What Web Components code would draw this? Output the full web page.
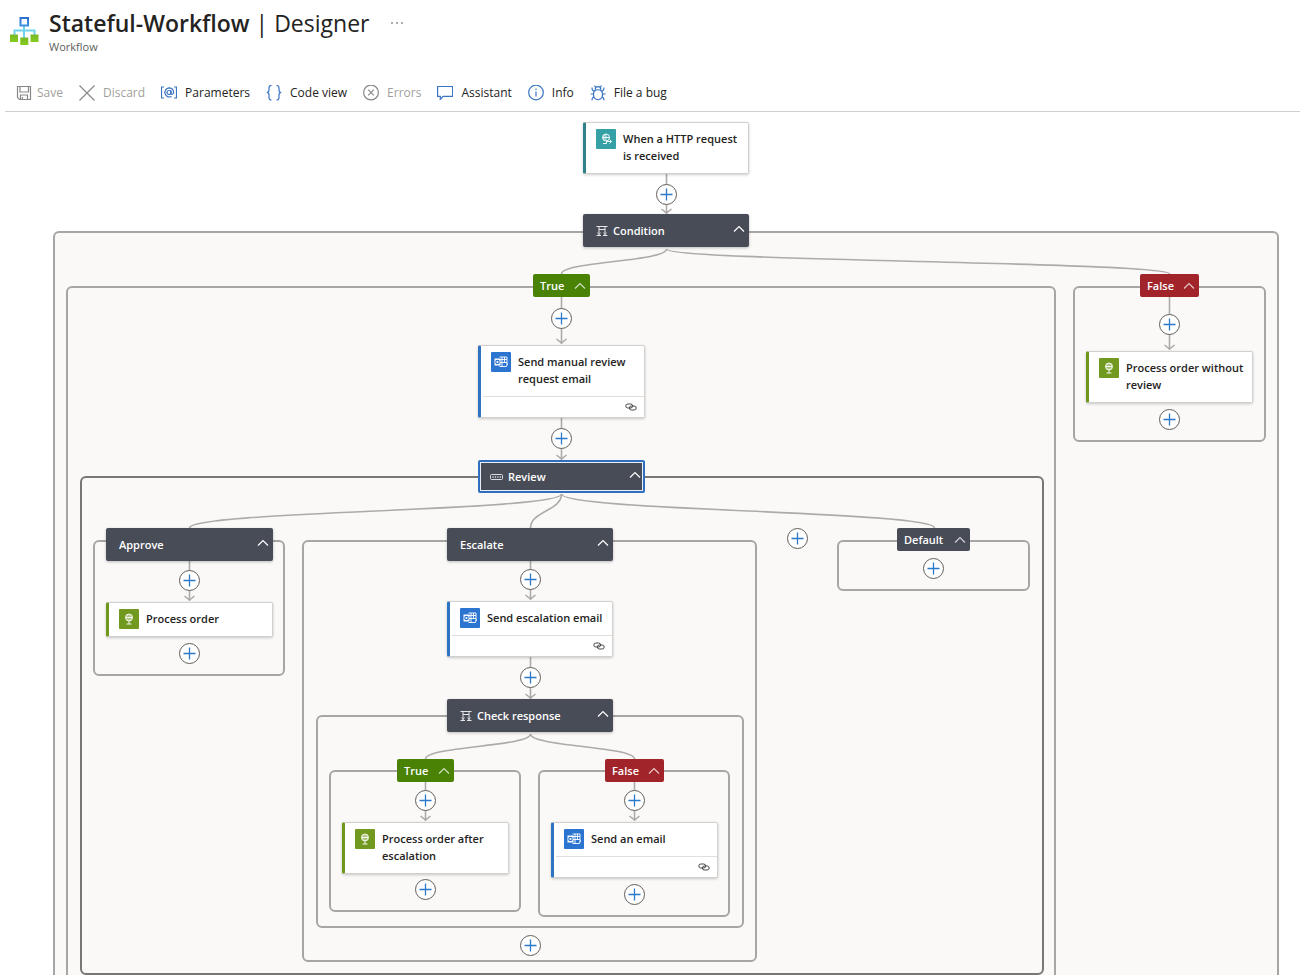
<!DOCTYPE html>
<html lang="en">
<head>
<meta charset="utf-8">
<title>Stateful-Workflow | Designer</title>
<style>
  html, body { height: 100%; margin: 0; }
  body { background: #fff; color: #242322; font-family: "Open Sans", "Noto Sans", sans-serif; }
</style>
</head>
<body>
<workflow-app>
  <blade-header slot="header" name="Stateful-Workflow" page="Designer" kind="Workflow"></blade-header>
  <command-bar slot="header">
    <command-button icon="save" disabled>Save</command-button>
    <command-button icon="discard" disabled>Discard</command-button>
    <command-button icon="parameters">Parameters</command-button>
    <command-button icon="code">Code view</command-button>
    <command-button icon="errors" disabled>Errors</command-button>
    <command-button icon="assistant">Assistant</command-button>
    <command-button icon="info">Info</command-button>
    <command-button icon="bug">File a bug</command-button>
  </command-bar>

  <scope-frame x="53" y="119" w="1226" h="1000"></scope-frame>
  <scope-frame x="66" y="174" w="990" h="900"></scope-frame>
  <scope-frame x="1073" y="174" w="193" h="156"></scope-frame>
  <scope-frame x="80" y="364" w="964" h="499" selected></scope-frame>
  <scope-frame x="93" y="428" w="192" h="136"></scope-frame>
  <scope-frame x="302" y="428" w="455" h="422"></scope-frame>
  <scope-frame x="837" y="428" w="193" h="51"></scope-frame>
  <scope-frame x="316" y="603" w="428" h="213"></scope-frame>
  <scope-frame x="329" y="658" w="192" h="142"></scope-frame>
  <scope-frame x="538" y="658" w="192" h="147"></scope-frame>

  <flow-edges></flow-edges>

  <action-card x="583" y="10" w="166" kind="request">When a HTTP request is received</action-card>
  <add-step x="656" y="72"></add-step>
  <scope-header x="583" y="102" w="166" icon="condition">Condition</scope-header>

  <scope-tag x="533" y="162" w="57" tone="true">True</scope-tag>
  <add-step x="551" y="196"></add-step>
  <action-card x="478" y="233" w="167" kind="outlook" linked>Send manual review request email</action-card>
  <add-step x="551" y="316"></add-step>
  <scope-header x="478" y="348" w="167" icon="switch" selected>Review</scope-header>

  <scope-tag x="1140" y="162" w="59" tone="false">False</scope-tag>
  <add-step x="1159" y="202"></add-step>
  <action-card x="1086" y="239" w="167" kind="http">Process order without review</action-card>
  <add-step x="1159" y="297"></add-step>

  <scope-header x="106" y="416" w="167">Approve</scope-header>
  <add-step x="179" y="458"></add-step>
  <action-card x="106" y="490" w="167" kind="http">Process order</action-card>
  <add-step x="179" y="531"></add-step>

  <scope-header x="447" y="416" w="166">Escalate</scope-header>
  <add-step x="520" y="457"></add-step>
  <action-card x="447" y="489" w="166" kind="outlook" linked>Send escalation email</action-card>
  <add-step x="520" y="555"></add-step>
  <scope-header x="447" y="587" w="166" icon="condition">Check response</scope-header>

  <add-step x="787" y="416"></add-step>
  <scope-tag x="897" y="416" w="73" tone="default">Default</scope-tag>
  <add-step x="923" y="446"></add-step>

  <scope-tag x="397" y="647" w="57" tone="true">True</scope-tag>
  <add-step x="415" y="678"></add-step>
  <action-card x="342" y="710" w="167" kind="http">Process order after escalation</action-card>
  <add-step x="415" y="767"></add-step>

  <scope-tag x="605" y="647" w="59" tone="false">False</scope-tag>
  <add-step x="624" y="678"></add-step>
  <action-card x="551" y="710" w="167" kind="outlook" linked>Send an email</action-card>
  <add-step x="624" y="772"></add-step>
  <add-step x="520" y="823"></add-step>
</workflow-app>

<script>
const ICONS = {
  save: '<path d="M1.500 1.500h13v13H3.500l-2-2zM4 1.500v5.500h8.500V1.500M4.500 14.500V10h7v4.500M6.500 12v2.500"/>',
  discard: '<path d="M.5.5l15 15M15.500.500l-15 15"/>',
  parameters: '<path d="M3 2H.500v11H3M13 2h2.500v11H13"/><circle cx="8" cy="7.500" r="2"/><path d="M10 5.300v2.800c0 1.900 2.600 1.500 2.600-.8C12.600 4.500 10.600 2.800 8 2.800A4.600 4.600 0 1 0 10.500 11.500"/>',
  code: '<path d="M5.500.500C3.500.500 3 1.500 3 3v2C3 6.500 2.300 7.500.7 7.500 2.300 7.500 3 8.500 3 10v2.500C3 14 3.500 15 5.500 15M10.500.500c2 0 2.500 1 2.500 2.500v2C13 6.500 13.700 7.500 15.300 7.500 13.700 7.500 13 8.500 13 10v2.500c0 1.500-.5 2.500-2.500 2.500"/>',
  errors: '<circle cx="8" cy="7.500" r="7.400"/><path d="M5.200 4.700l5.600 5.600M10.800 4.700l-5.600 5.600"/>',
  assistant: '<path d="M.6 1.500h15v9.800H6.200L3.300 14.200V11.300H.6z"/>',
  info: '<circle cx="8" cy="7.500" r="7.300"/><path d="M8 6.500v5M8 3.500v1.400"/>',
  bug: '<path d="M5.200 4.500a2.800 2.800 0 0 1 5.600 0M5 5.500C6 4.500 10 4.500 11 5.500c2 2 2 5.500.5 7.500-1.700 2.300-5.300 2.300-7 0-1.500-2-1.500-5.500.5-7.500zM5.800 2.500L4.500.700M10.200 2.500l1.300-1.800M4.500 6C2.500 6 2 5 2 2.500M11.500 6c2 0 2.500-1 2.500-3.500M3.400 9H.600M12.600 9h3M4.400 12C2.500 12 2 13 2 15.300M11.600 12c1.900 0 2.400 1 2.400 3.300"/>',
};

const sheet = (host, css, html) => {
  const root = host.attachShadow({ mode: "open" });
  root.innerHTML = `<style>*{box-sizing:border-box}${css}</style>${html}`;
  return root;
};

/* Base of everything that has a place on the canvas: reads x, y, w, h. */
class CanvasItem extends HTMLElement {
  place() {
    const s = this.style;
    s.left = this.getAttribute("x") + "px";
    s.top = this.getAttribute("y") + "px";
    if (this.hasAttribute("w")) s.width = this.getAttribute("w") + "px";
    if (this.hasAttribute("h")) s.height = this.getAttribute("h") + "px";
  }
}

customElements.define("workflow-app", class extends HTMLElement {
  connectedCallback() {
    sheet(this, `
      :host{display:flex;flex-direction:column;height:100%;min-height:600px}
      main{position:relative;flex:1;min-height:0;overflow:hidden}`,
      `<slot name="header"></slot><main><slot></slot></main>`);
  }
});

customElements.define("blade-header", class extends HTMLElement {
  connectedCallback() {
    sheet(this, `
      :host{display:block}
      header{display:flex;gap:10px;padding:8px 10px 20px}
      .logo{flex:none;width:29px;height:30px;margin-top:8px}
      .row{display:flex;align-items:center;gap:20px}
      h1{margin:0;font-size:23px;line-height:30px;font-weight:400;white-space:nowrap}
      h1 b{font-weight:600}
      p{margin:0;font-size:11px;line-height:17px;color:#605e5c}
      button{border:0;background:none;padding:0;width:16px;height:16px;display:flex;color:#444}`,
      `<header>
        <svg class="logo" viewBox="0 0 29 30" aria-hidden="true">
          <defs>
            <linearGradient id="b" x2="0" y2="1"><stop stop-color="#2f6fd0"/><stop offset="1" stop-color="#3d8fe0"/></linearGradient>
            <linearGradient id="g" x2="0" y2="1"><stop stop-color="#79b829"/><stop offset="1" stop-color="#84cc1c"/></linearGradient>
          </defs>
          <path d="M14 10v12M4.500 19v-4.500h20V19" fill="none" stroke="#6fd3ee" stroke-width="2"/>
          <rect x="10.500" y="2" width="7.500" height="7.500" fill="#fff" stroke="url(#b)" stroke-width="2"/>
          <rect x="0" y="18.500" width="8" height="7.500" fill="url(#g)"/>
          <rect x="10.300" y="21.500" width="8" height="7.500" fill="url(#g)"/>
          <rect x="20.500" y="18.500" width="8" height="7.500" fill="url(#g)"/>
        </svg>
        <div>
          <div class="row"><h1><b>${this.getAttribute("name")}</b> | ${this.getAttribute("page")}</h1>
            <button aria-label="More actions"><svg width="16" height="16" fill="currentColor"><circle cx="3" cy="8" r=".8"/><circle cx="8" cy="8" r=".8"/><circle cx="13" cy="8" r=".8"/></svg></button></div>
          <p>${this.getAttribute("kind")}</p>
        </div>
      </header>`);
  }
});

customElements.define("command-bar", class extends HTMLElement {
  connectedCallback() {
    this.setAttribute("role", "toolbar");
    sheet(this, `
      :host{display:flex;gap:16px;height:37px;align-items:center;margin-left:5px;padding-left:11px;border-bottom:1px solid #d2d0ce;box-sizing:border-box}`,
      `<slot></slot>`);
  }
});

customElements.define("command-button", class extends HTMLElement {
  connectedCallback() {
    const icon = this.getAttribute("icon");
    sheet(this, `
      :host{display:block}
      button{display:flex;align-items:center;gap:8px;padding:0;border:0;background:none;font:inherit;font-size:12px;line-height:20px;color:#242322;white-space:nowrap}
      button:disabled{color:#a19f9d}
      .save{gap:5px}
      svg{flex:none;fill:none;stroke:#3a74c4;stroke-width:1.2}
      button:disabled svg{stroke:#8a8886}`,
      `<button class="${icon}" ${this.hasAttribute("disabled") ? "disabled" : ""}>
        <svg width="16" height="16" viewBox="0 0 16 16" aria-hidden="true">${ICONS[icon]}</svg><span><slot></slot></span></button>`);
  }
});

customElements.define("scope-frame", class extends CanvasItem {
  connectedCallback() {
    this.place();
    sheet(this, `
      :host{display:block;position:absolute;box-sizing:border-box;border:2px solid #a8a6a4;border-radius:6px;background:#faf9f8}
      :host([selected]){border-color:#797775}`, "");
  }
});

customElements.define("flow-edges", class extends HTMLElement {
  connectedCallback() {
    const arrows = [[666, 62, 102], [561, 185, 232], [561, 306, 348], [1169, 185, 238], [189, 449, 489],
      [530, 449, 488], [530, 545, 587], [425, 670, 709], [634, 670, 709]];
    const curves = [[666, 137, 561, 162], [666, 137, 1169, 162], [561, 382, 189, 416], [561, 382, 530, 416],
      [561, 382, 934, 416], [530, 622, 425, 647], [530, 622, 634, 647]];
    const straight = arrows.map(([x, a, b]) => `<path d="M${x} ${a}V${b}M${x - 5} ${b - 5}L${x} ${b - 1}L${x + 5} ${b - 5}"/>`).join("");
    const bent = curves.map(([x1, y1, x2, y2]) => {
      const m = (y1 + y2) / 2;
      return `<path d="M${x1} ${y1}C${x1} ${m} ${x2} ${m} ${x2} ${y2}"/>`;
    }).join("");
    sheet(this, `
      :host{display:block;position:absolute;inset:0}
      svg{width:100%;height:100%;fill:none;stroke:#adabaa;stroke-width:1.6}`,
      `<svg aria-hidden="true"><g transform="translate(.5 0)">${straight}${bent}</g></svg>`);
  }
});

customElements.define("add-step", class extends CanvasItem {
  connectedCallback() {
    this.place();
    sheet(this, `
      :host{display:block;position:absolute;width:21px;height:21px}
      button{display:block;width:100%;height:100%;padding:0;border:1px solid #605e5c;border-radius:50%;background:#fff}
      svg{display:block;stroke:#2b79c9;stroke-width:1.300}`,
      `<button aria-label="Add a step"><svg width="19" height="19" viewBox="0 0 19 19"><path d="M9.500 3.500v12M3.500 9.500h12"/></svg></button>`);
  }
});

const CHEVRON = '<svg width="12" height="8" viewBox="0 0 12 8" fill="none" stroke="currentColor" stroke-width="1.200"><path d="M1 6.500l5-5 5 5"/></svg>';
const SCOPE_ICONS = {
  condition: '<svg width="12" height="12" viewBox="0 0 12 12" fill="none" stroke="#e6e6e8"><path d="M.5 1.500h11M3 1.500v8.500M9 1.500v8.500M3 4.500h6M.5 10.500h4.500M7 10.500h4.500"/><path d="M1.500 7.500L3 9.500 4.500 7.500M7.500 7.500L9 9.500 10.500 7.500" stroke-width=".8"/></svg>',
  switch: '<svg width="13" height="12" viewBox="0 0 13 12" fill="none" stroke="#dcdde0"><rect x=".5" y="3.500" width="12" height="5" rx="1"/><path d="M2.500 6h8.500" stroke-dasharray="1.200 1.200" stroke-width="1.600"/></svg>',
};

customElements.define("scope-header", class extends CanvasItem {
  connectedCallback() {
    this.place();
    const icon = this.getAttribute("icon");
    sheet(this, `
      :host{display:flex;align-items:center;position:absolute;box-sizing:border-box;height:33px;padding:0 4px 0 13px;border-radius:2px;background:#484c56;color:#fff;font-size:11px;line-height:17px;font-weight:600;box-shadow:0 1px 3px rgba(0,0,0,.25)}
      :host([selected]){border:2px solid #2f6fbe;box-shadow:inset 0 0 0 1px #e8eefa;padding:0 2px 0 10px}
      .i{display:flex;flex:none;margin-right:5px}
      .t{flex:1;white-space:nowrap}
      button{display:flex;padding:0 0 4px;border:0;background:none;color:#fff}`,
      `${icon ? `<span class="i">${SCOPE_ICONS[icon]}</span>` : ""}<span class="t"><slot></slot></span><button aria-label="Collapse">${CHEVRON}</button>`);
  }
});

customElements.define("scope-tag", class extends CanvasItem {
  connectedCallback() {
    this.place();
    sheet(this, `
      :host{display:flex;align-items:center;justify-content:space-between;position:absolute;box-sizing:border-box;height:23px;padding:0 4px 0 7px;border-radius:2px;background:#484c56;color:#fff;font-size:11px;line-height:17px;font-weight:600}
      :host([tone=true]){background:#498205}
      :host([tone=false]){background:#a0242a}
      button{display:flex;padding:0;border:0;background:none;color:rgba(255,255,255,.75)}`,
      `<span><slot></slot></span><button aria-label="Collapse">${CHEVRON}</button>`);
  }
});

const GLOBE = '<circle cx="10" cy="8.500" r="3.500"/><path d="M6.500 8.500h7M10 5v7M8.500 5.500c-1 2-1 4 0 6M11.500 5.500c1 2 1 4 0 6M10 12v3M7.500 15h5"/>';
const KINDS = {
  request: ["#2f8087", "#35a0a6", '<circle cx="10" cy="8.500" r="3.500"/><path d="M6.500 8.500h7M10 5v6M8.500 5.500c-1 2-1 4 0 6M7 14.500h3.500v-2.500M11 12.500h4.500M13.500 10.500l2 2-2 2"/>'],
  http: ["#6f971c", "#719920", GLOBE],
  outlook: ["#2f74c0", "#2b74d0", '<path d="M8.500 5h7.500v8M8.500 7.500h7.500M11 5v9.500M13.500 5v6M8.500 10.500h7.500M8.500 14.500h7l1-3"/><rect x="3.500" y="6.500" width="6" height="7" fill="#fff" stroke="none"/><circle cx="6.500" cy="10" r="1.700" stroke="#2b74d0" stroke-width="1.200"/>'],
};

customElements.define("action-card", class extends CanvasItem {
  connectedCallback() {
    this.place();
    const [bar, tile, glyph] = KINDS[this.getAttribute("kind")];
    sheet(this, `
      :host{display:block;position:absolute;box-sizing:border-box;border:1px solid #d2d0ce;border-left:3px solid ${bar};border-radius:2px;background:#fff;box-shadow:0 1px 3px rgba(0,0,0,.2)}
      .head{display:flex;gap:7px;padding:6px 0 6px 10px;align-items:flex-start}
      .tile{flex:none;display:block;width:20px;height:20px;background:${tile};border-radius:1px}
      .t{font-size:11px;line-height:17px;font-weight:600;padding:1px 0 3px}
      .foot{display:flex;justify-content:flex-end;align-items:center;height:21px;padding-right:7px;margin-left:2px;border-top:1px solid #e1dfdd}`,
      `<div class="head"><svg class="tile" viewBox="0 0 20 20" fill="none" stroke="#fff" stroke-width=".9" aria-hidden="true">${glyph}</svg><span class="t"><slot></slot></span></div>
      ${this.hasAttribute("linked") ? '<div class="foot"><svg width="12" height="10" viewBox="0 0 12 10" fill="none" stroke="#484644" role="img" aria-label="Has a connection"><rect x=".8" y="2" width="6.800" height="4" rx="2"/><rect x="4.400" y="4" width="6.800" height="4" rx="2"/></svg></div>' : ""}`);
  }
});
</script>
</body>
</html>
